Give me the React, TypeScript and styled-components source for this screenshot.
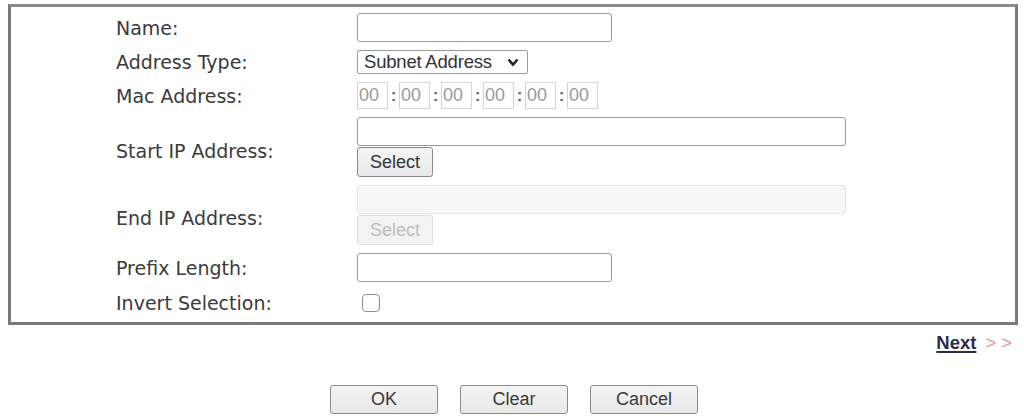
import React from 'react';
import styled, { createGlobalStyle } from 'styled-components';

const GlobalStyle = createGlobalStyle`
  html, body {
    margin: 0;
    padding: 0;
    background: #fff;
  }
  body {
    font-family: 'DejaVu Sans', Verdana, sans-serif;
    color: #333;
  }
`;

const Page = styled.div`
  display: flex;
  flex-direction: column;
  padding: 4px 6px 0 8px;
`;

const FormBox = styled.div`
  display: grid;
  grid-template-columns: 241px 1fr;
  row-gap: 8px;
  align-items: center;
  padding: 6px 0 6px 105px;
  border: 3px solid #7a7a7a;
  border-top-color: #8a8a8a;
`;

const Label = styled.div<{ $shift?: number }>`
  font-size: 19px;
  color: #3b3b3b;
  white-space: nowrap;
  padding-top: ${({ $shift }) => $shift ?? 0}px;
`;

const Field = styled.div`
  display: flex;
  flex-direction: column;
  align-items: flex-start;
`;

const TextInput = styled.input<{ $width: number }>`
  box-sizing: border-box;
  width: ${({ $width }) => $width}px;
  height: 29px;
  border: 1.5px solid #9a9a9a;
  border-radius: 3px;
  background: #fff;
  font-family: 'Liberation Sans', Arial, sans-serif;
  font-size: 17px;
  padding: 0 4px;
  &:disabled {
    background: #f7f7f7;
    border-color: #e6e6e6;
  }
`;

const SelectWrap = styled.div`
  position: relative;
  width: 171px;
  height: 24px;
`;

const Select = styled.select`
  appearance: none;
  box-sizing: border-box;
  width: 100%;
  height: 100%;
  border: 1.5px solid #9a9a9a;
  border-radius: 2px;
  background: #fff;
  font-family: 'Liberation Sans', Arial, sans-serif;
  font-size: 18.5px;
  letter-spacing: -0.2px;
  color: #333;
  padding: 0 0 0 6px;
  line-height: 20px;
`;

const Chevron = styled.svg`
  position: absolute;
  right: 9px;
  top: 8px;
  pointer-events: none;
`;

const MacRow = styled.div`
  display: flex;
  align-items: center;
  height: 27px;
`;

const MacInput = styled.input`
  box-sizing: border-box;
  width: 31px;
  height: 27px;
  border: 1.5px solid #d4d4d4;
  background: #fff;
  font-family: 'Liberation Sans', Arial, sans-serif;
  font-size: 18px;
  color: #9a9a9a;
  padding: 0 0 0 1px;
`;

const Colon = styled.span`
  width: 11px;
  text-align: center;
  font-family: 'Liberation Sans', Arial, sans-serif;
  font-size: 17px;
  font-weight: bold;
  color: #666;
`;

const SmallButton = styled.button`
  box-sizing: border-box;
  width: 76px;
  height: 30px;
  margin-top: 1px;
  border: 1.5px solid #8a8a8a;
  border-radius: 3px;
  background: linear-gradient(#f4f4f4, #e9e9e9);
  font-family: 'Liberation Sans', Arial, sans-serif;
  font-size: 18px;
  color: #333;
  padding: 0;
  &:disabled {
    border-color: #dedede;
    background: #f3f3f3;
    color: #bdbdbd;
  }
`;

const CheckBox = styled.input`
  appearance: none;
  box-sizing: border-box;
  width: 18px;
  height: 18px;
  margin: 4px 0 4px 5px;
  border: 1.5px solid #8e8e8e;
  border-radius: 4px;
  background: #fff;
`;

const NextRow = styled.div`
  display: flex;
  justify-content: flex-end;
  align-items: center;
  gap: 9px;
  padding: 7px 1px 0 0;
  font-family: 'Liberation Sans', Arial, sans-serif;
  font-size: 18.5px;
  line-height: 22px;
`;

const NextLink = styled.a`
  font-weight: bold;
  color: #2b2b4d;
  text-decoration: underline;
  text-decoration-thickness: 2px;
  text-underline-offset: 2px;
`;

const Arrows = styled.span`
  color: #e9919f;
  letter-spacing: 5px;
`;

const ButtonBar = styled.div`
  display: flex;
  justify-content: center;
  gap: 22px;
  padding: 31px 0 0 2px;
`;

const ActionButton = styled.button`
  box-sizing: border-box;
  width: 108px;
  height: 29px;
  border: 1.5px solid #8a8a8a;
  border-radius: 3px;
  background: linear-gradient(#f4f4f4, #e8e8e8);
  font-family: 'Liberation Sans', Arial, sans-serif;
  font-size: 18px;
  color: #3a3a3a;
  padding: 0;
`;

const App: React.FC = () => {
  const mac = ['00', '00', '00', '00', '00', '00'];

  return (
    <>
      <GlobalStyle />
      <Page>
        <FormBox>
          <Label>Name:</Label>
          <Field>
            <TextInput $width={255} />
          </Field>

          <Label>Address Type:</Label>
          <Field>
            <SelectWrap>
              <Select defaultValue="subnet">
                <option value="subnet">Subnet Address</option>
                <option value="range">Range Address</option>
                <option value="single">Single Address</option>
              </Select>
              <Chevron width="12" height="9" viewBox="0 0 12 9">
                <path d="M1.5 1.5 L6 6.5 L10.5 1.5" fill="none" stroke="#222" strokeWidth="2.6" />
              </Chevron>
            </SelectWrap>
          </Field>

          <Label>Mac Address:</Label>
          <MacRow>
            {mac.map((v, i) => (
              <React.Fragment key={i}>
                {i > 0 && <Colon>:</Colon>}
                <MacInput defaultValue={v} disabled />
              </React.Fragment>
            ))}
          </MacRow>

          <Label $shift={8}>Start IP Address:</Label>
          <Field>
            <TextInput $width={489} />
            <SmallButton>Select</SmallButton>
          </Field>

          <Label $shift={6}>End IP Address:</Label>
          <Field>
            <TextInput $width={489} disabled />
            <SmallButton disabled>Select</SmallButton>
          </Field>

          <Label>Prefix Length:</Label>
          <Field>
            <TextInput $width={255} />
          </Field>

          <Label>Invert Selection:</Label>
          <Field>
            <CheckBox type="checkbox" />
          </Field>
        </FormBox>

        <NextRow>
          <NextLink>Next</NextLink>
          <Arrows>&gt;&gt;</Arrows>
        </NextRow>

        <ButtonBar>
          <ActionButton>OK</ActionButton>
          <ActionButton>Clear</ActionButton>
          <ActionButton>Cancel</ActionButton>
        </ButtonBar>
      </Page>
    </>
  );
};

export default App;
